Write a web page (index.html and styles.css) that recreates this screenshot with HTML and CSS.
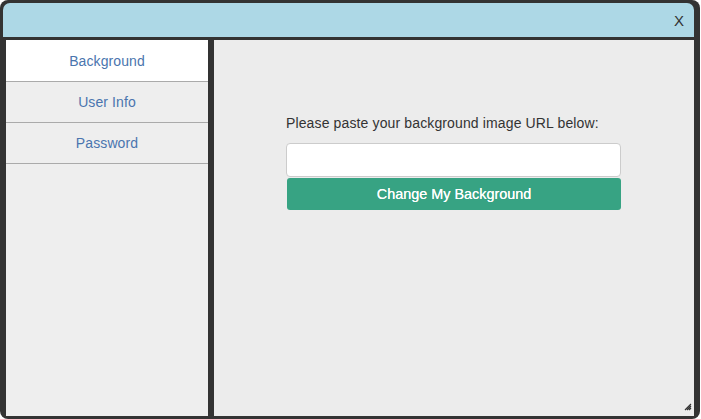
FILE: index.html
```html
<!DOCTYPE html>
<html>
<head>
<meta charset="utf-8">
<link rel="stylesheet" href="styles.css">
</head>
<body>
<div class="window">
  <div class="header"><span class="close">X</span></div>
  <div class="body">
    <nav class="sidebar">
      <a class="tab active">Background</a>
      <a class="tab">User Info</a>
      <a class="tab">Password</a>
    </nav>
    <main class="main">
      <div class="form">
        <label class="label">Please paste your background image URL below:</label>
        <input class="input" type="text">
        <button class="btn">Change My Background</button>
      </div>
      <svg class="grip" width="8" height="8" viewBox="0 0 8 8">
        <path d="M7 1 L1 7 M7 3 L3 7 M7 5 L5 7" stroke="#333" stroke-width="1.2" fill="none"/>
      </svg>
    </main>
  </div>
</div>
</body>
</html>
```
FILE: styles.css
```css
html, body { margin: 0; padding: 0; background: #fff; }
body { font-family: "Liberation Sans", Arial, sans-serif; font-size: 14px; color: #333; }
.window {
  width: 700px; height: 419px; box-sizing: border-box;
  background: #333; border-radius: 8px;
  padding: 3px 6px 3px 3px;
  display: flex; flex-direction: column; gap: 3px;
}
.header {
  height: 34px; flex: none; background: #add8e6;
  border-radius: 7px 7px 0 0;
  display: flex; align-items: center; justify-content: flex-end;
  padding-right: 10px;
}
.close { font-size: 15px; color: #333; line-height: 1; margin-top: 1px; }
.body { flex: 1; display: flex; gap: 6px; margin-left: 3px; min-height: 0; }
.sidebar { width: 202px; background: #eee; display: flex; flex-direction: column; flex: none; }
.tab {
  height: 40px; border-bottom: 1px solid #aaa;
  display: flex; align-items: center; justify-content: center;
  color: #4a75ae; font-size: 14px; letter-spacing: 0.1px;
}
.tab.active { background: #fff; height: 41px; }
.main { flex: 1; background: #ececec; position: relative; display: flex; justify-content: flex-start; padding-left: 72px; }
.form { width: 335px; padding-top: 73px; display: flex; flex-direction: column; }
.label { line-height: 20px; margin-bottom: 10px; font-size: 14px; color: #333; letter-spacing: 0.13px; }
.input {
  height: 34px; box-sizing: border-box; border: 1px solid #ccc; border-radius: 4px;
  background: #fff; margin: 0 0 1px 0; font-size: 14px;
}
.btn {
  height: 32px; margin-left: 1px; border: none; border-radius: 3px;
  background: #37a383; color: #fff; font-weight: normal;
  font-family: "Liberation Sans", Arial, sans-serif; font-size: 14.4px;
  text-shadow: 0 0 0.4px #fff;
}
.grip { position: absolute; right: 2px; bottom: 5px; }
```
